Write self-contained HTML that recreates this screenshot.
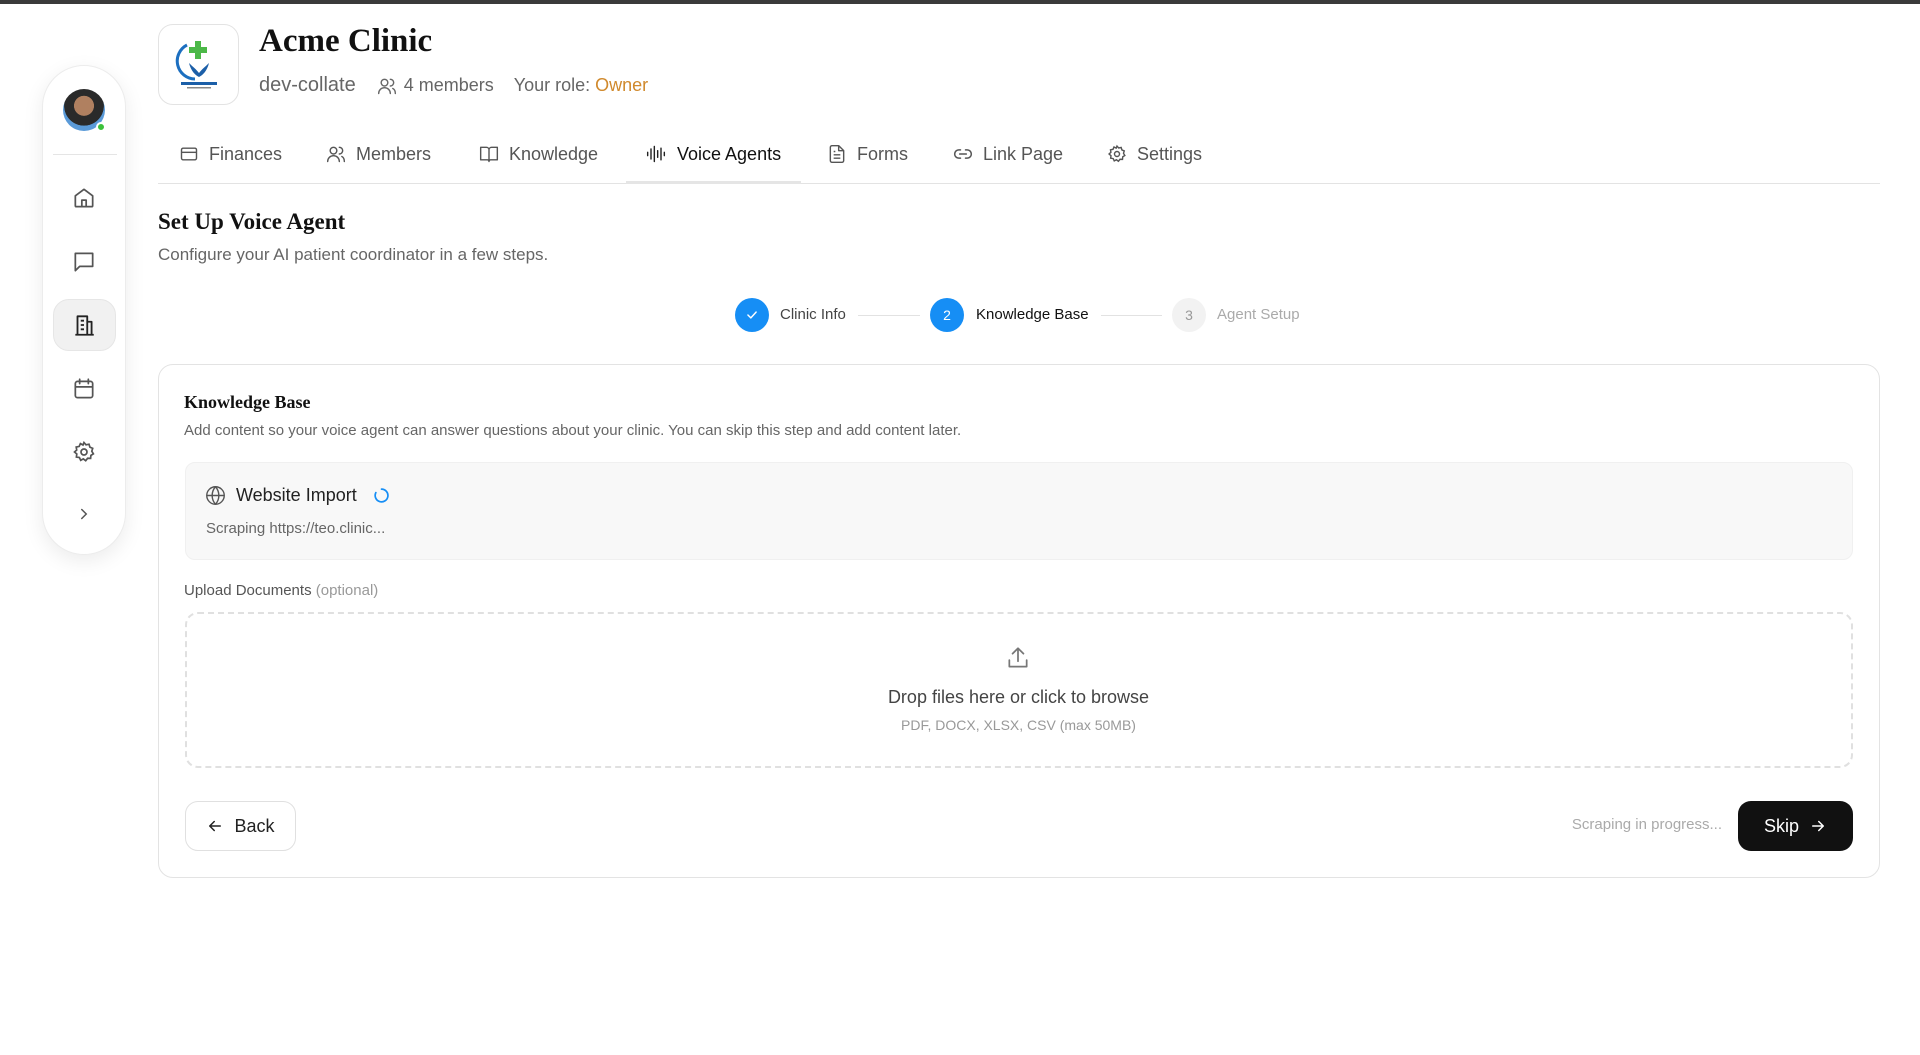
<!DOCTYPE html>
<html><head><meta charset="utf-8">
<style>
*{box-sizing:border-box;margin:0;padding:0}
html,body{width:1920px;height:1055px;overflow:hidden;background:#fff;font-family:"Liberation Sans",sans-serif;color:#1a1a1a}
.abs{position:absolute}
.topbar{left:0;top:0;width:1920px;height:4px;background:#3a3a3a}
.side{left:42px;top:65px;width:84px;height:490px;border:1px solid #ececec;border-radius:42px;background:#fff;box-shadow:0 6px 20px rgba(0,0,0,.08)}
.ico{position:absolute;left:50%;transform:translate(-50%,-50%)}
svg{display:block}
.tab{position:absolute;top:143px;font-size:18px;color:#555;display:flex;align-items:center;gap:10px;height:22px}
.serif{font-family:"Liberation Serif",serif}
.stxt{position:absolute;font-size:15px;top:306px}
.circ{position:absolute;top:298px;width:34px;height:34px;border-radius:50%;display:flex;align-items:center;justify-content:center;font-size:14px}
.line{position:absolute;top:315px;height:1px;background:#e2e2e2}
</style></head><body>
<div class="abs topbar"></div>

<div class="abs side">
  <div style="position:absolute;left:20px;top:23px;width:42px;height:42px;border-radius:50%;background:radial-gradient(circle at 50% 40%,#b08060 0 30%,#2a2a2a 31% 60%,#5a9ad8 61%);"></div>
  <div style="position:absolute;left:53px;top:56px;width:10px;height:10px;border-radius:50%;background:#3cc13b;border:2px solid #fff"></div>
  <div style="position:absolute;left:10px;top:88px;width:64px;height:1px;background:#e5e5e5"></div>
  <div style="position:absolute;left:10px;top:233px;width:63px;height:52px;border-radius:16px;background:#f1f1f1;border:1px solid #e6e6e6"></div>
  <svg class="ico" style="top:132px" width="26" height="26" viewBox="0 0 24 24" fill="none" stroke="#555" stroke-width="1.6" stroke-linecap="round" stroke-linejoin="round"><path d="M4 10l8-6 8 6v9a1 1 0 0 1-1 1H5a1 1 0 0 1-1-1z"/><path d="M10 20v-6h4v6"/></svg>
  <svg class="ico" style="top:196px" width="26" height="26" viewBox="0 0 24 24" fill="none" stroke="#555" stroke-width="1.6" stroke-linejoin="round"><path d="M4 4h16v12H8l-4 4z"/></svg>
  <svg class="ico" style="top:259px" width="26" height="26" viewBox="0 0 24 24" fill="none" stroke="#222" stroke-width="1.7" stroke-linejoin="round"><path d="M6 21V4h9v17M15 9h4v12M4 21h17M9 8h3M9 12h3M9 16h3"/></svg>
  <svg class="ico" style="top:323px" width="26" height="26" viewBox="0 0 24 24" fill="none" stroke="#555" stroke-width="1.6" stroke-linecap="round"><rect x="4" y="5" width="16" height="15" rx="2"/><path d="M4 10h16M8 3v4M16 3v4"/></svg>
  <svg class="ico" style="top:386px" width="24" height="24" viewBox="0 0 24 24" fill="none" stroke="#555" stroke-width="1.7"><circle cx="12" cy="12" r="3"/><path d="M12 2.5l2 2.3 3-.6.9 2.9 2.8 1.2-.9 2.9 1.6 2.6-2.5 1.6-.3 3-3-.1-1.9 2.4-2.4-1.8-2.6 1.4-1.3-2.8-3-.5.4-3L2.5 12l2.2-2-.5-3 3-.6L8.4 3.6 11 5z"/></svg>
  <svg class="ico" style="top:448px" width="18" height="18" viewBox="0 0 24 24" fill="none" stroke="#555" stroke-width="2" stroke-linecap="round"><path d="M9 6l6 6-6 6"/></svg>
</div>

<div class="abs" style="left:158px;top:24px;width:81px;height:81px;border:1px solid #e3e3e3;border-radius:15px;background:#fff">
  <svg style="position:absolute;left:16px;top:10px" width="48" height="56" viewBox="0 0 48 56">
    <path d="M12 10a18 18 0 0 0 8 34" fill="none" stroke="#1c6fc0" stroke-width="3"/>
    <path d="M20 6h6v6h6v6h-6v6h-6v-6h-6v-6h6z" fill="#4cb848"/>
    <path d="M14 28c2 8 6 12 10 14 4-2 8-6 10-14-4 4-7 6-10 10-3-4-6-6-10-10z" fill="#1c5fa8"/>
    <rect x="6" y="47" width="36" height="3" fill="#1c5fa8"/>
    <rect x="12" y="52" width="24" height="1.5" fill="#888"/>
  </svg>
</div>
<div class="abs serif" style="left:259px;top:23px;font-size:33px;font-weight:bold;color:#111">Acme Clinic</div>
<div class="abs" style="left:259px;top:74px;font-size:20px;color:#666;display:flex;align-items:center">
  <span>dev-collate</span>
  <svg style="margin-left:21px" width="20" height="20" viewBox="0 0 24 24" fill="none" stroke="#666" stroke-width="1.7" stroke-linecap="round"><circle cx="9" cy="8" r="4"/><path d="M2 21c0-4 3-7 7-7s7 3 7 7M16 4a4 4 0 0 1 0 8M19 15c2 1 3 3 3 6"/></svg>
  <span style="margin-left:7px;font-size:18px">4 members</span>
  <span style="margin-left:20px;font-size:18px">Your role: <span style="color:#d0892c">Owner</span></span>
</div>

<div class="tab" style="left:179px"><svg width="20" height="20" viewBox="0 0 24 24" fill="none" stroke="#555" stroke-width="1.7"><rect x="3" y="5" width="18" height="14" rx="2"/><path d="M3 10h18"/></svg><span>Finances</span></div>
<div class="tab" style="left:326px"><svg width="20" height="20" viewBox="0 0 24 24" fill="none" stroke="#555" stroke-width="1.7" stroke-linecap="round"><circle cx="9" cy="8" r="4"/><path d="M2 21c0-4 3-7 7-7s7 3 7 7M16 4a4 4 0 0 1 0 8M19 15c2 1 3 3 3 6"/></svg><span>Members</span></div>
<div class="tab" style="left:479px"><svg width="20" height="20" viewBox="0 0 24 24" fill="none" stroke="#555" stroke-width="1.7" stroke-linejoin="round"><path d="M2 4h7a3 3 0 0 1 3 3v14a2 2 0 0 0-2-2H2zM22 4h-7a3 3 0 0 0-3 3v14a2 2 0 0 1 2-2h8z"/></svg><span>Knowledge</span></div>
<div class="tab" style="left:645px;color:#111"><svg width="22" height="20" viewBox="0 0 24 24" fill="none" stroke="#222" stroke-width="1.7" stroke-linecap="round"><path d="M2 10v4M6 6v12M10 3v18M14 8v8M18 5v14M22 10v4"/></svg><span>Voice Agents</span></div>
<div class="tab" style="left:827px"><svg width="20" height="20" viewBox="0 0 24 24" fill="none" stroke="#555" stroke-width="1.7" stroke-linejoin="round"><path d="M14 2H6a2 2 0 0 0-2 2v16a2 2 0 0 0 2 2h12a2 2 0 0 0 2-2V8z"/><path d="M14 2v6h6M8 13h8M8 17h8M8 9h2"/></svg><span>Forms</span></div>
<div class="tab" style="left:953px"><svg width="20" height="20" viewBox="0 0 24 24" fill="none" stroke="#555" stroke-width="1.8" stroke-linecap="round"><path d="M9 17H7a5 5 0 0 1 0-10h2M15 7h2a5 5 0 0 1 0 10h-2M8 12h8"/></svg><span>Link Page</span></div>
<div class="tab" style="left:1107px"><svg width="20" height="20" viewBox="0 0 24 24" fill="none" stroke="#555" stroke-width="1.7"><circle cx="12" cy="12" r="3"/><path d="M12 2.5l2 2.3 3-.6.9 2.9 2.8 1.2-.9 2.9 1.6 2.6-2.5 1.6-.3 3-3-.1-1.9 2.4-2.4-1.8-2.6 1.4-1.3-2.8-3-.5.4-3L2.5 12l2.2-2-.5-3 3-.6L8.4 3.6 11 5z"/></svg><span>Settings</span></div>
<div class="abs" style="left:158px;top:183px;width:1722px;height:1px;background:#e3e3e3"></div>
<div class="abs" style="left:626px;top:181px;width:175px;height:3px;background:#e5e5e5"></div>

<div class="abs serif" style="left:158px;top:209px;font-size:23px;font-weight:bold;color:#111">Set Up Voice Agent</div>
<div class="abs" style="left:158px;top:245px;font-size:17px;color:#666">Configure your AI patient coordinator in a few steps.</div>

<div class="circ" style="left:735px;background:#168ef5"><svg width="14" height="14" viewBox="0 0 24 24" fill="none" stroke="#fff" stroke-width="2.5" stroke-linecap="round" stroke-linejoin="round"><path d="M5 12l5 5 9-10"/></svg></div>
<div class="stxt" style="left:780px;color:#444">Clinic Info</div>
<div class="line" style="left:858px;width:62px"></div>
<div class="circ" style="left:930px;background:#168ef5;color:#fff">2</div>
<div class="stxt" style="left:976px;color:#111">Knowledge Base</div>
<div class="line" style="left:1101px;width:61px"></div>
<div class="circ" style="left:1172px;background:#f2f2f2;color:#999">3</div>
<div class="stxt" style="left:1217px;color:#aaa">Agent Setup</div>

<div class="abs" style="left:158px;top:364px;width:1722px;height:514px;border:1px solid #e3e3e3;border-radius:15px"></div>
<div class="abs serif" style="left:184px;top:392px;font-size:18px;font-weight:bold;color:#111">Knowledge Base</div>
<div class="abs" style="left:184px;top:422px;font-size:15px;color:#666">Add content so your voice agent can answer questions about your clinic. You can skip this step and add content later.</div>

<div class="abs" style="left:185px;top:462px;width:1668px;height:98px;border:1px solid #f0f0f0;border-radius:10px;background:#f8f8f8"></div>
<svg class="abs" style="left:205px;top:485px" width="21" height="21" viewBox="0 0 24 24" fill="none" stroke="#555" stroke-width="1.6"><circle cx="12" cy="12" r="10"/><path d="M2 12h20M12 2a15 15 0 0 1 0 20M12 2a15 15 0 0 0 0 20"/></svg>
<div class="abs" style="left:236px;top:485px;font-size:18px;color:#222">Website Import</div>
<svg class="abs" style="left:373px;top:487px" width="17" height="17" viewBox="0 0 24 24" fill="none" stroke="#168ef5" stroke-width="2.4" stroke-linecap="round"><path d="M12 3a9 9 0 1 1-8 5"/></svg>
<div class="abs" style="left:206px;top:520px;font-size:15px;color:#666">Scraping https://teo.clinic...</div>

<div class="abs" style="left:184px;top:582px;font-size:15px;color:#555">Upload Documents <span style="color:#999">(optional)</span></div>
<div class="abs" style="left:185px;top:612px;width:1668px;height:156px;border:2px dashed #e0e0e0;border-radius:13px"></div>
<svg class="abs" style="left:1005px;top:645px" width="26" height="26" viewBox="0 0 24 24" fill="none" stroke="#777" stroke-width="1.6" stroke-linecap="round" stroke-linejoin="round"><path d="M12 15V3M7 8l5-5 5 5M4 14v6h16v-6"/></svg>
<div class="abs" style="left:0;width:2037px;text-align:center;top:687px;font-size:18px;color:#444">Drop files here or click to browse</div>
<div class="abs" style="left:0;width:2037px;text-align:center;top:717px;font-size:14px;color:#999">PDF, DOCX, XLSX, CSV (max 50MB)</div>

<div class="abs" style="left:185px;top:801px;width:111px;height:50px;border:1px solid #e0e0e0;border-radius:13px;display:flex;align-items:center;justify-content:center;gap:10px;font-size:18px;color:#222">
<svg width="18" height="18" viewBox="0 0 24 24" fill="none" stroke="#222" stroke-width="2" stroke-linecap="round" stroke-linejoin="round"><path d="M19 12H5M11 6l-6 6 6 6"/></svg>Back</div>
<div class="abs" style="left:1400px;width:322px;text-align:right;top:816px;font-size:15px;color:#aaa">Scraping in progress...</div>
<div class="abs" style="left:1738px;top:801px;width:115px;height:50px;background:#111;border-radius:13px;display:flex;align-items:center;justify-content:center;gap:10px;font-size:18px;color:#fff">Skip
<svg width="18" height="18" viewBox="0 0 24 24" fill="none" stroke="#fff" stroke-width="2" stroke-linecap="round" stroke-linejoin="round"><path d="M5 12h14M13 6l6 6-6 6"/></svg></div>
</body></html>
